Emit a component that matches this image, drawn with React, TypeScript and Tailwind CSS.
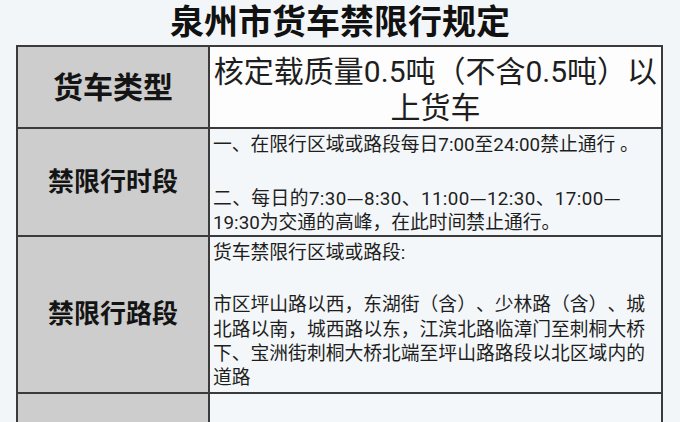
const font = "font-[Roboto,'Noto_Sans_CJK_SC',sans-serif]";

const Head = ({ children, big }: { children: string; big?: boolean }) => (
  <div
    className={`flex items-center justify-center bg-[#cdcdcd] font-bold text-[#141414] ${
      big ? 'text-[30px]' : 'text-[26px]'
    }`}
  >
    {children}
  </div>
);

const Line = ({ children, className = '' }: { children: React.ReactNode; className?: string }) => (
  <div className={`whitespace-nowrap ${className}`}>{children}</div>
);

// full-width dash from the CJK face
const Dash = () => <span className="font-['Noto_Sans_CJK_SC',sans-serif]">—</span>;

export default function App() {
  return (
    <div
      className={`h-[422px] overflow-hidden bg-[#f3f6f8] text-[#1e1e1e] [text-spacing-trim:space-all] ${font}`}
    >
      <h1 className="h-[45px] text-center text-[34px] font-bold leading-[45px] text-[#111]">
        泉州市货车禁限行规定
      </h1>

      <div className="ml-[16px] grid w-[647px] grid-cols-[190px_451px] gap-[2px] bg-[#3b3b3b] p-[2px]">
        {/* 货车类型 */}
        <Head big>货车类型</Head>
        <div className="flex h-[80px] flex-col items-center justify-center bg-[#fdfdfd] px-[2px] pt-[6px] text-center text-[30px] leading-[36px]">
          <Line>核定载质量0.5吨（不含0.5吨）以</Line>
          <Line>上货车</Line>
        </div>

        {/* 禁限行时段 */}
        <Head>禁限行时段</Head>
        <div className="h-[106px] bg-[#f4f7f9] px-[3px] pt-[4px] text-[18.8px] leading-[24px]">
          <Line>一、在限行区域或路段每日7:00至24:00禁止通行 。</Line>
          <div className="h-[28px]" />
          <Line className="tracking-[0.4px]">
            二、每日的7:30<Dash />8:30、11:00<Dash />12:30、17:00<Dash />
          </Line>
          <Line>19:30为交通的高峰，在此时间禁止通行。</Line>
        </div>

        {/* 禁限行路段 */}
        <Head>禁限行路段</Head>
        <div className="h-[155px] bg-[#f4f7f9] px-[3px] pt-[4px] text-[18.8px] leading-[24.3px]">
          <Line>货车禁限行区域或路段:</Line>
          <div className="h-[28px]" />
          <Line>市区坪山路以西，东湖街（含）、少林路（含）、城</Line>
          <Line>北路以南，城西路以东，江滨北路临漳门至刺桐大桥</Line>
          <Line>下、宝洲街刺桐大桥北端至坪山路路段以北区域内的</Line>
          <Line>道路</Line>
        </div>

        <div className="h-[60px] bg-[#cdcdcd]" />
        <div className="h-[60px] bg-[#f4f7f9]" />
      </div>
    </div>
  );
}
